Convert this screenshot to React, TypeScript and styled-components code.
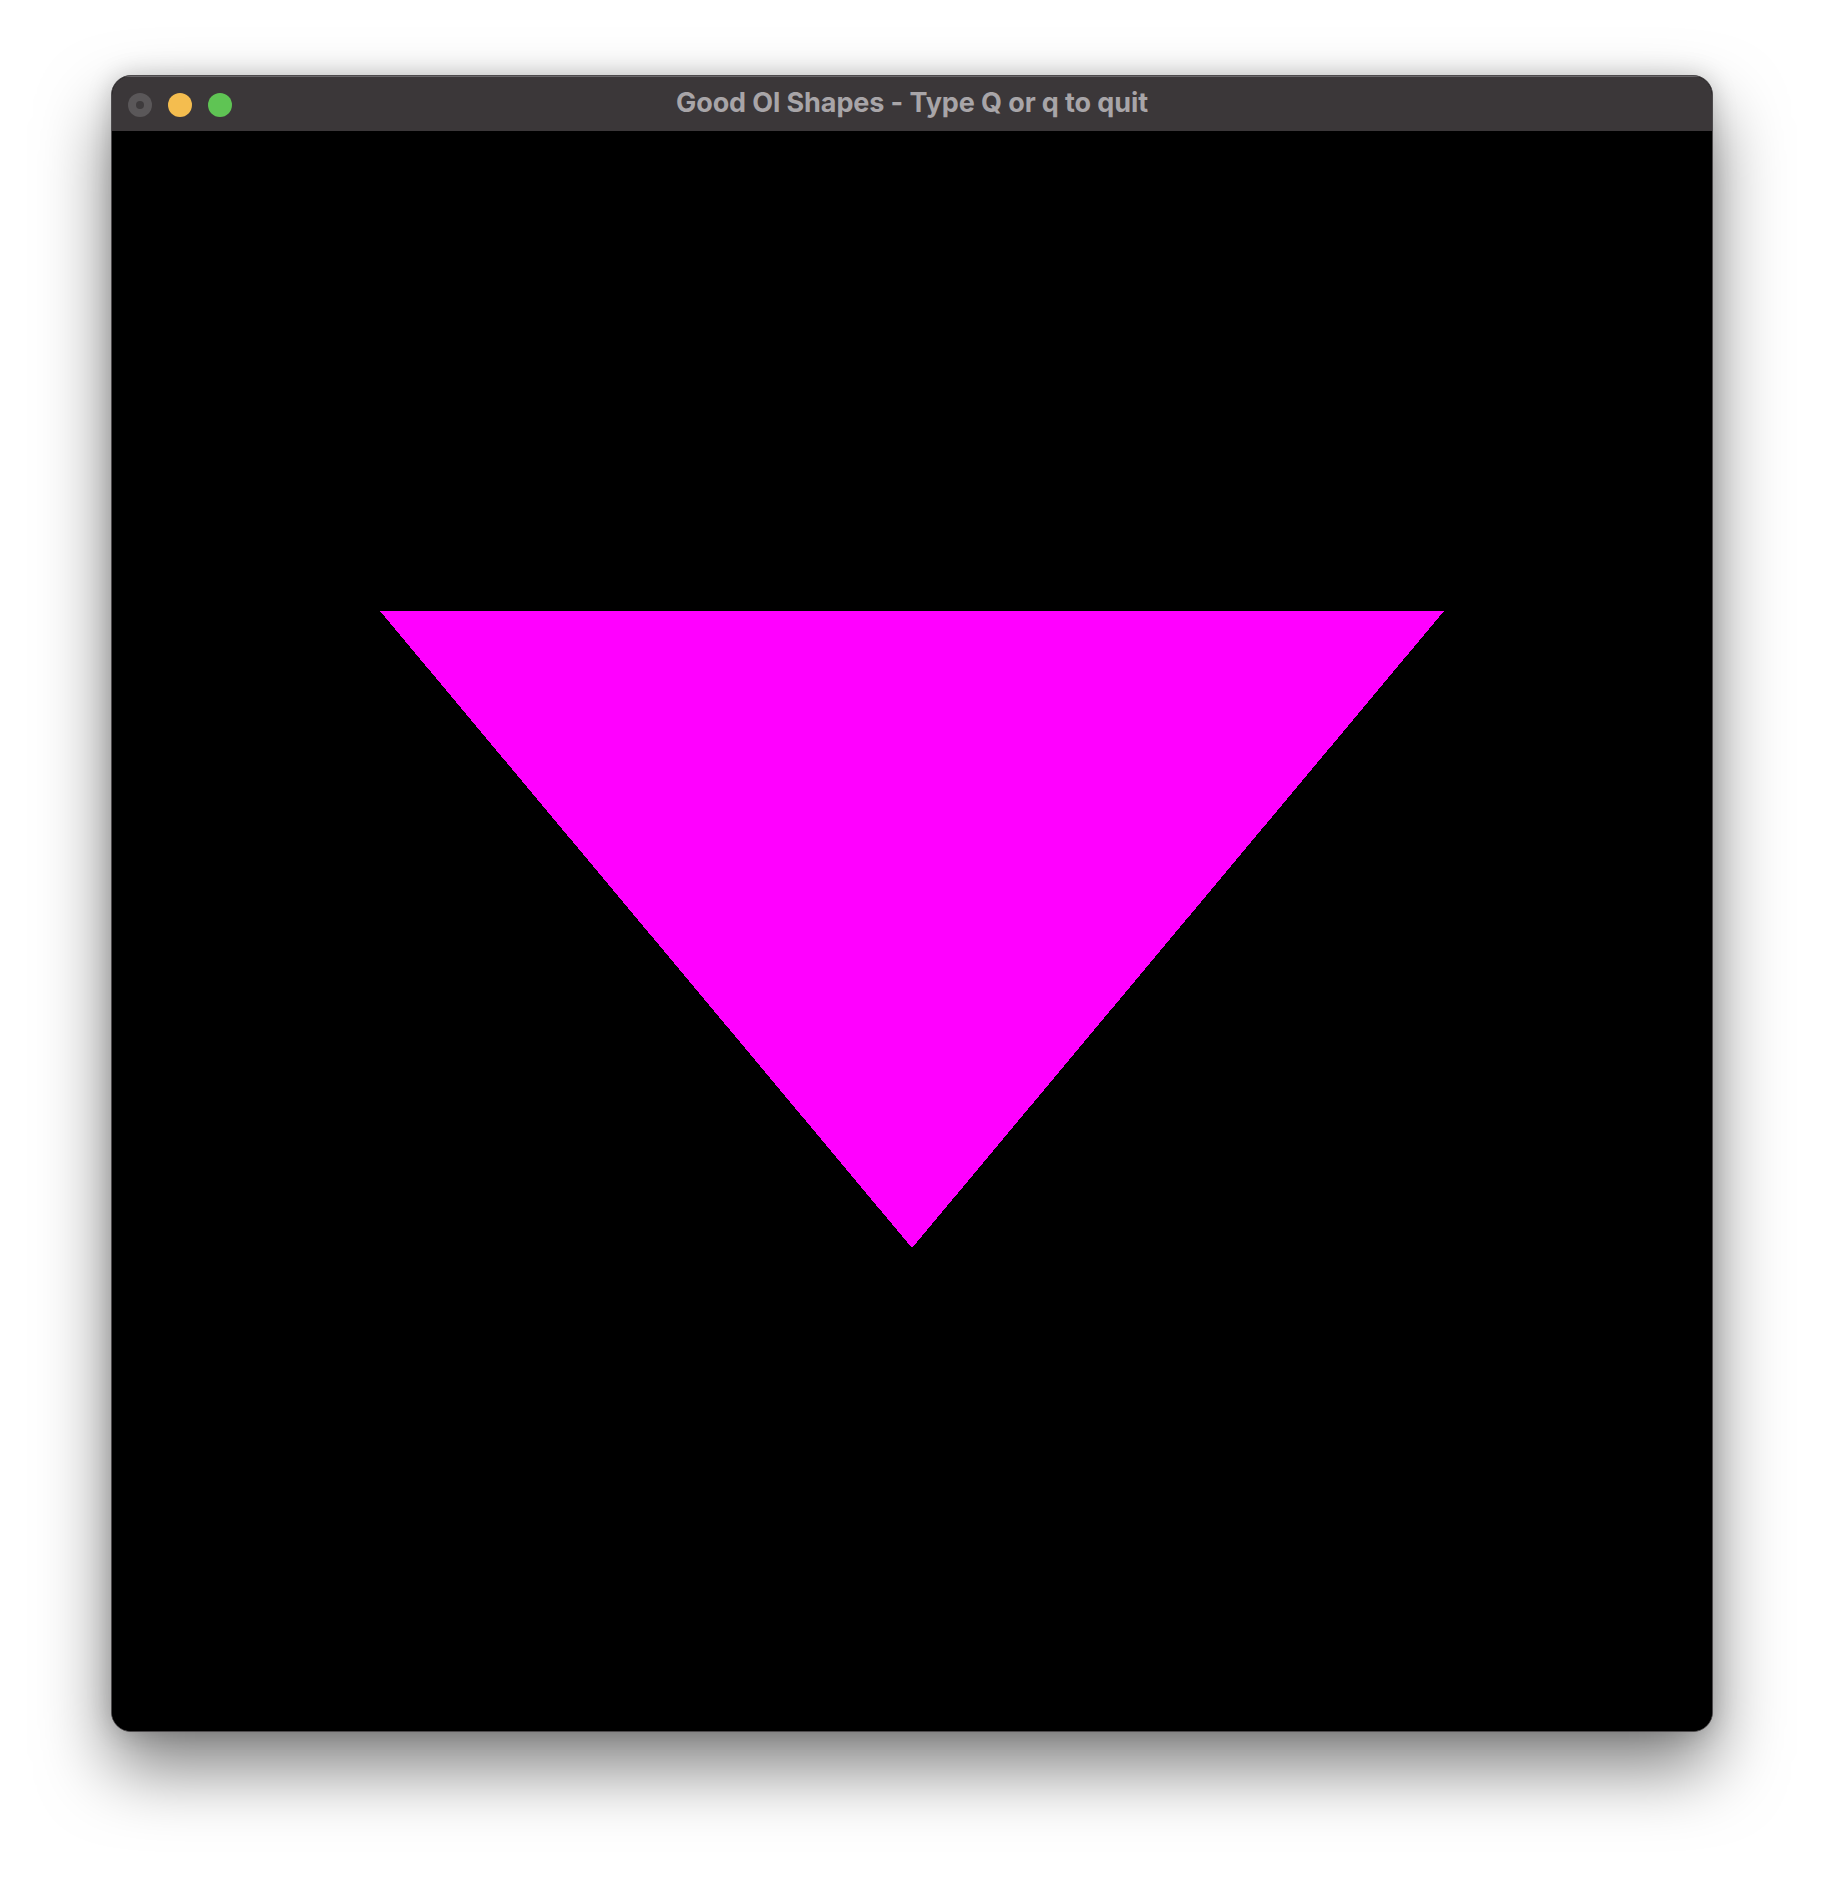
import styled, { createGlobalStyle } from "styled-components";

const GlobalStyle = createGlobalStyle`
  html, body {
    margin: 0;
    padding: 0;
    background: #ffffff;
  }
  body {
    font-family: Inter, "Liberation Sans", sans-serif;
  }
`;

const Page = styled.div`
  width: 1824px;
  height: 1880px;
  box-sizing: border-box;
  padding: 75px 0 0 111px;
  background: #ffffff;
`;

const Window = styled.div`
  width: 1602px;
  display: flex;
  flex-direction: column;
  border: 1px solid #4d4a4c;
  border-radius: 20px;
  overflow: hidden;
  box-sizing: border-box;
  box-shadow: 0 36px 70px rgba(0, 0, 0, 0.5), 0 0 24px rgba(0, 0, 0, 0.18);
  background: #000;
`;

const TitleBar = styled.div`
  position: relative;
  height: 55px;
  box-sizing: border-box;
  padding-bottom: 4px;
  display: flex;
  align-items: center;
  justify-content: center;
  background: #3b3739;
  border-top: 1px solid #6a676a;
`;

const Lights = styled.div`
  position: absolute;
  left: 16px;
  top: 16px;
  display: flex;
  gap: 16px;
`;

const Light = styled.span<{ color: string; dim?: boolean }>`
  width: 24px;
  height: 24px;
  border-radius: 50%;
  background: ${({ color }) => color};
  display: flex;
  align-items: center;
  justify-content: center;
  &::after {
    content: "";
    display: ${({ dim }) => (dim ? "block" : "none")};
    width: 8px;
    height: 8px;
    border-radius: 50%;
    background: #3e3b3d;
  }
`;

const Title = styled.span`
  color: #a8a5a8;
  font-size: 27px;
  font-weight: 700;
  letter-spacing: -0.1px;
`;

const Canvas = styled.div`
  width: 1600px;
  height: 1600px;
  background: #000000;
`;

const App = () => {
  return (
    <>
      <GlobalStyle />
      <Page>
        <Window>
          <TitleBar>
            <Lights>
              <Light color="#5a5759" dim />
              <Light color="#f4bd4f" />
              <Light color="#5fc454" />
            </Lights>
            <Title>Good Ol Shapes - Type Q or q to quit</Title>
          </TitleBar>
          <Canvas>
            <svg width="1600" height="1600" viewBox="0 0 1600 1600" shapeRendering="crispEdges">
              <polygon points="268,480 1332,480 800,1117" fill="#ff00ff" />
            </svg>
          </Canvas>
        </Window>
      </Page>
    </>
  );
};

export default App;
